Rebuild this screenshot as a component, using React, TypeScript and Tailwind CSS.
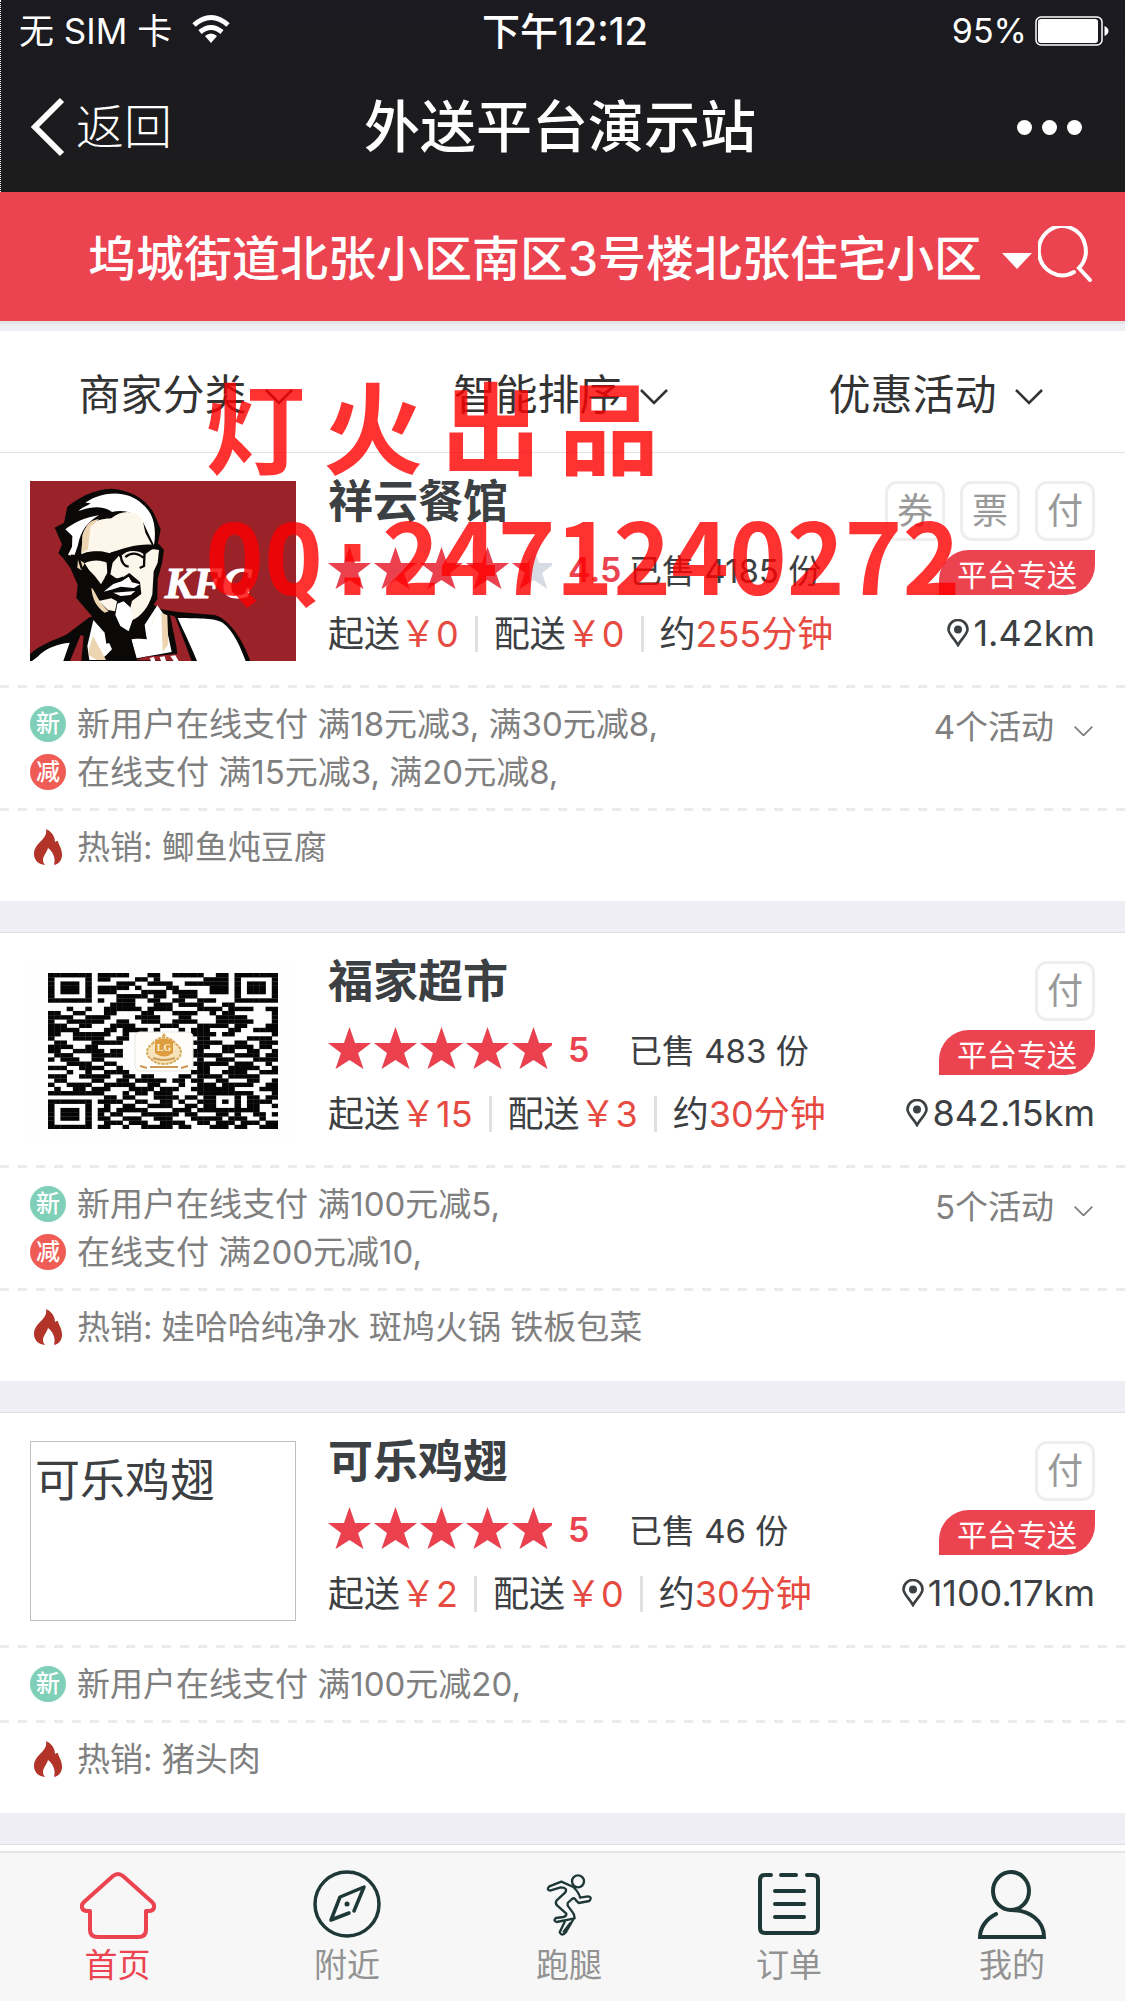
import React from 'react';

interface Store {
  name: string;
  cover: React.ReactNode;
  badges: string[];
  rating: number;
  sold: number;
  minOrder: number;
  deliveryFee: number;
  minutes: number;
  distance: string;
  newUserPromo: string;
  payPromo?: string;
  activityCount?: number;
  hot: string;
}

const filters = ['商家分类', '智能排序', '优惠活动'];

const qrRows = [
  '1111111011111000110011111001101111111',
  '1000001011000011010000000111101000001',
  '1011101000011100111100111111101011101',
  '1011101011111010000110000011101011101',
  '1011101011100001111011110011101011101',
  '1000001000011111011001110000001000001',
  '1111111010011100110011001110001111111',
  '0000000000111100011101111000110000000',
  '0001001001111110111100001111011110011',
  '1100110001100001100011110010110000001',
  '1111001111000011110001100001111100001',
  '1001111110011001110011110001111110001',
  '1110011000111100001110001111101100011',
  '1111100001101111010001011100011001111',
  '1100111111001000000000011110110000001',
  '1000111110011000000000001100000011110',
  '0110000111110000000000011111001100111',
  '1111001100000000000000001100111110110',
  '1100111110110000000000011000110011001',
  '0111000111110000000000011111001111011',
  '1011100110000000000000001001110001111',
  '0001111001100000000000011111101110010',
  '1110011110010000000000001100011111001',
  '0001001001111000000000011100111100111',
  '1110011111001101100001101111011111000',
  '0110000110011011111011011001100011001',
  '1001111001111100110001001110111110011',
  '0100110111000111101110011111110000111',
  '1111111110001011011100001111111110001',
  '0000000001101100011110110110001011011',
  '1111111011110011001101001110101011110',
  '1000001001001100111100110110001011001',
  '1011101011011111000011101111111111000',
  '1011101010110001111110110001101001101',
  '1011101011001110011100011111011100100',
  '1000001001110111001111001101110111011',
  '1111111011001001111101100011101100111',
];

const starPoints = '21.5,0 27,16 43,16 30,26 35.5,42 21.5,33 7.5,42 13,26 0,16 16,16';

function ChefCover() {
  return (
    <svg viewBox="6 15 798 540" preserveAspectRatio="none" className="h-full w-full" role="img" aria-label="KFC">
      <rect x="6" y="15" width="798" height="540" fill="#9a2229" />
      <path d="M6 555V534C40 502 95 487 118 474L182 425 350 370 400 400 450 408 560 417C605 430 645 492 667 555Z" fill="#0b0908" />
      <path d="M118 92C150 66 195 40 250 38 320 42 368 82 385 128L398 160 390 202 408 222 402 262 389 310 388 370 360 410 345 475 240 475 183 410 145 366 149 326 127 276 105 246 91 232 102 205 80 155 108 140Z" fill="#0b0908" />
      <path d="M152 105C160 94 178 90 188 82L172 80C230 42 300 44 342 83 378 112 386 156 378 208L352 153C338 112 290 98 252 108 226 88 190 91 152 105Z" fill="#fff" />
      <path d="M112 160C135 143 168 124 213 118 178 138 158 165 150 207L138 242 120 236 132 212 133 180Z" fill="#fff" />
      <path d="M164 176C178 137 215 129 250 127 284 98 325 104 344 132L352 170 371 206C330 203 282 217 246 232 215 220 180 227 160 235Z" fill="#fdf6eb" />
      <path d="M164 176C178 137 192 133 213 129L187 154 180 220 160 232Z" fill="#ecd5b0" />
      <path d="M274 238C292 225 326 218 350 236L373 219 393 222 389 260 377 286 373 355C362 395 337 423 312 433L305 403 312 375 340 354 336 318 304 291 272 312 247 295 254 260Z" fill="#fdf6eb" />
      <path d="M170 262C190 250 221 252 236 260L238 292 219 325 201 301 183 282Z" fill="#fdf6eb" />
      <path d="M190 335C201 341 205 370 242 406L230 410C205 392 193 370 190 335ZM170 262L150 249 148 275 160 282Z" fill="#ecd5b0" />
      <path d="M212 375L250 367 267 376 261 406 240 402Z" fill="#fdf6eb" />
      <path d="M227 347L256 324 281 316 302 302 312 319 336 325 318 336 278 332 255 340Z" fill="#fff" />
      <path d="M256 350L322 345 308 357 278 360ZM268 383L287 376 306 393 316 425 302 466 277 450 262 417Z" fill="#fff" />
      <path d="M128 240L157 243 C180 225 220 230 242 240 C255 227 270 230 276 237 C300 212 345 213 365 217L392 212" fill="none" stroke="#0b0908" strokeWidth="9" />
      <path d="M151 243L161 276 181 285M238 242L245 284 235 306M278 238C280 260 287 270 302 272M350 220L348 270 335 276M172 252C193 235 208 235 226 255M292 243C310 228 330 232 346 245M233 300C248 313 267 314 286 305" fill="none" stroke="#0b0908" strokeWidth="7" />
      <path d="M196 432L230 470 252 520 236 536 218 552 184 552 178 510Z" fill="#fff" />
      <path d="M183 520L195 480 234 552H207L182 538Z" fill="#ecd5b0" />
      <path d="M388 388L407 415 431 528 326 547 310 490 355 484 350 446Z" fill="#fff" />
      <path d="M388 388L374 440 344 492 371 446ZM400 410L418 418 421 505 404 528Z" fill="#ecd5b0" />
      <path d="M12 555L28 543C55 515 87 504 125 500L106 555ZM449 426C520 427 558 426 584 440 618 466 637 513 653 555H507C480 490 462 456 449 426Z" fill="#fff" />
      <path d="M126 555L158 477 167 480 160 555ZM426 417L441 422 491 555H450L445 510Z" fill="#9a2229" />
      <path d="M322 553L352 542 472 532 480 555Z" fill="#9a2229" />
      <path d="M365 546l13-3 4 12h-13zM395 543l15-2 4 14h-15zM427 540l15-2 10 17h-15z" fill="#fff" />
      <path d="M230 471L283 474 347 452 357 490 309 486 326 555H284L289 490 235 503Z" fill="#0b0908" />
      <text x="410" y="365" fill="#fff" stroke="#fff" strokeWidth="3" fontSize="130" fontWeight="700" fontStyle="italic" fontFamily="'Liberation Serif', serif">KFC</text>
    </svg>
  );
}

function QrCover() {
  return (
    <svg viewBox="0 0 266 180" className="h-full w-full" role="img" aria-label="福家超市二维码">
      <rect width="266" height="180" fill="#fefefe" />
      <svg x="18" y="12" width="230" height="156" viewBox="0 0 37 37" preserveAspectRatio="none">
        {qrRows.map((row, y) =>
          row.split('').map((cell, x) => cell === '1' && <rect key={`${x}-${y}`} x={x} y={y} width="1.05" height="1.05" fill="#050505" />)
        )}
      </svg>
      <rect x="105" y="71" width="58" height="39" rx="5" fill="#fffefb" stroke="#e9e5dd" />
      <path d="M122 83q5-6 12-7 7 1 12 7 7 5 4 12-6 8-16 8t-16-8q-3-7 4-12z" fill="#f7e4bb" stroke="#d6a95a" strokeWidth="2" strokeDasharray="3 1" />
      <path d="M125 80q9-5 18 0v12q-9 7-18 0zM134 72l2 3h-4z" fill="#dd9c3d" />
      <text x="134" y="90" textAnchor="middle" fontSize="10" fontWeight="700" fill="#fff3d6" fontFamily="'Liberation Serif', serif">LG</text>
      <path d="M120 106h28M110 105l7 2M158 105l-7 2M123 97q11 4 22 0" stroke="#c99b56" strokeWidth="2" fill="none" />
    </svg>
  );
}

const stores: Store[] = [
  {
    name: '祥云餐馆',
    cover: <ChefCover />,
    badges: ['券', '票', '付'],
    rating: 4.5,
    sold: 4185,
    minOrder: 0,
    deliveryFee: 0,
    minutes: 255,
    distance: '1.42km',
    newUserPromo: '新用户在线支付 满18元减3, 满30元减8,',
    payPromo: '在线支付 满15元减3, 满20元减8,',
    activityCount: 4,
    hot: '鲫鱼炖豆腐',
  },
  {
    name: '福家超市',
    cover: <QrCover />,
    badges: ['付'],
    rating: 5,
    sold: 483,
    minOrder: 15,
    deliveryFee: 3,
    minutes: 30,
    distance: '842.15km',
    newUserPromo: '新用户在线支付 满100元减5,',
    payPromo: '在线支付 满200元减10,',
    activityCount: 5,
    hot: '娃哈哈纯净水 斑鸠火锅 铁板包菜',
  },
  {
    name: '可乐鸡翅',
    cover: <div className="h-full w-full border border-[#c0c0c0] px-1 pt-4 text-[45px] leading-[45px]">可乐鸡翅</div>,
    badges: ['付'],
    rating: 5,
    sold: 46,
    minOrder: 2,
    deliveryFee: 0,
    minutes: 30,
    distance: '1100.17km',
    newUserPromo: '新用户在线支付 满100元减20,',
    hot: '猪头肉',
  },
];

function Chevron({ className }: { className: string }) {
  return (
    <svg viewBox="0 0 28 16" className={className} fill="none" stroke="currentColor" strokeWidth="2.6">
      <path d="M1 1l13 13L27 1" />
    </svg>
  );
}

function Stars({ id, rating }: { id: string; rating: number }) {
  return (
    <svg width="224" height="42" viewBox="0 0 224 42" className="shrink-0" role="img" aria-label={`${rating}`}>
      <clipPath id={id}>
        <rect width={(rating / 5) * 224} height="42" />
      </clipPath>
      {[0, 1, 2, 3, 4].map((i) => (
        <polygon key={i} points={starPoints} transform={`translate(${i * 46} 0)`} fill="#d7dbe4" />
      ))}
      <g clipPath={`url(#${id})`}>
        {[0, 1, 2, 3, 4].map((i) => (
          <polygon key={i} points={starPoints} transform={`translate(${i * 46} 0)`} fill="#eb414f" />
        ))}
      </g>
    </svg>
  );
}

function DashedLine() {
  return <div className="h-[3px] bg-[repeating-linear-gradient(90deg,#ebebeb_0_9px,transparent_9px_18px)]" />;
}

function PromoRow({ tag, color, text }: { tag: string; color: string; text: string }) {
  return (
    <div className="flex h-12 items-center">
      <span className={`flex h-9 w-9 items-center justify-center rounded-full text-[24px] leading-none font-medium text-white ${color}`}>{tag}</span>
      <span className="ml-[11px] pt-0.5 whitespace-pre">{text}</span>
    </div>
  );
}

function Flame() {
  return (
    <svg width="28" height="36" viewBox="0 0 28 36" className="mx-1 shrink-0" fill="#b23428">
      <path d="M12 0c5 2 9 7 9 13 1-1 2-1 3-1 0 3 4 7 4 14 0 5-3 9-8 10 2-7-1-13-6-17-1 4-5 8-5 12 0 2 1 4 2 5C4 35 0 31 0 25c0-6 4-10 8-14 3-3 5-7 4-11z" />
    </svg>
  );
}

function StoreCard({ store, index }: { store: Store; index: number }) {
  return (
    <article className="bg-white text-[33px] text-[#808080]">
      <div className="flex px-[30px] pt-7 pb-6 text-[#3c4043]">
        <div className="h-[180px] w-[266px] shrink-0">{store.cover}</div>
        <div className="ml-8 min-w-0 flex-1 whitespace-nowrap">
          <h2 className="text-[45px] leading-[42px] font-bold">{store.name}</h2>
          <div className="mt-6 flex h-[42px] items-center">
            <Stars id={`stars-${index}`} rating={store.rating} />
            <span className="ml-4 w-[61px] pt-1 text-[34px] leading-none font-semibold text-[#eb4350]">{store.rating}</span>
            <span className="pt-1.5 leading-none">已售 {store.sold} 份</span>
          </div>
          <div className="mt-6 flex h-[42px] items-center text-[36px] leading-[42px]">
            <span>起送<span className="text-[#e64a41]">￥{store.minOrder}</span></span>
            <span className="mx-4 h-9 w-[3px] bg-[#e0e0e0]" />
            <span>配送<span className="text-[#e64a41]">￥{store.deliveryFee}</span></span>
            <span className="mx-4 h-9 w-[3px] bg-[#e0e0e0]" />
            <span>约<span className="text-[#e64a41]">{store.minutes}分钟</span></span>
          </div>
        </div>
        <div className="flex flex-col items-end">
          <div className="flex gap-[15px]">
            {store.badges.map((badge) => (
              <span key={badge} className="flex h-[60px] w-[60px] items-center justify-center rounded-xl border-3 border-[#eee] text-[36px] leading-none text-[#999]">{badge}</span>
            ))}
          </div>
          <span className="mt-[9px] flex h-[45px] items-center rounded-tl-[30px] rounded-br-[30px] bg-[#eb4350] px-[18px] pt-1 text-[30px] leading-none text-white">平台专送</span>
          <span className="mt-[15px] flex h-[45px] items-center text-[36px] leading-none">
            <svg width="22" height="28" viewBox="0 0 22 28" className="mr-1">
              <path d="M11 26C7 19 1.500 15 1.500 10.500a9.500 9.500 0 0 1 19 0C20.500 15 15 19 11 26z" fill="none" stroke="currentColor" strokeWidth="2.600" />
              <circle cx="11" cy="10.500" r="4" fill="currentColor" />
            </svg>
            {store.distance}
          </span>
        </div>
      </div>
      <DashedLine />
      <div className="flex justify-between px-[30px] py-3">
        <div>
          <PromoRow tag="新" color="bg-[#80cfb9]" text={store.newUserPromo} />
          {store.payPromo && <PromoRow tag="减" color="bg-[#ee5c55]" text={store.payPromo} />}
        </div>
        {store.activityCount && (
          <button type="button" className="flex h-14 items-center">
            {store.activityCount}个活动
            <Chevron className="mt-1.5 mr-[2px] ml-5 w-[19px]" />
          </button>
        )}
      </div>
      <DashedLine />
      <div className="flex h-[90px] items-start px-[30px] pt-3">
        <div className="flex h-12 items-center">
          <Flame />
          <span className="ml-[11px] pt-0.5">热销: {store.hot}</span>
        </div>
      </div>
    </article>
  );
}

const tabs = [
  {
    label: '首页',
    active: true,
    icon: (
      <svg width="76" height="70" viewBox="0 0 76 70" fill="none" stroke="currentColor" strokeWidth="4" strokeLinejoin="round">
        <path d="M10 42H7c-5 0-7-5-3-9L33 7q5-4 10 0l29 26c4 4 2 9-3 9h-3v19q0 7-8 7H18q-8 0-8-7z" />
      </svg>
    ),
  },
  {
    label: '附近',
    icon: (
      <svg width="68" height="70" viewBox="0 0 68 70" fill="none" stroke="#1e3838" strokeWidth="3.500" strokeLinecap="round" strokeLinejoin="round">
        <circle cx="34" cy="35" r="32" />
        <path d="M36 44L18 51l9-23 24-10-10 24" />
        <circle cx="34" cy="35" r="2.500" fill="#1e3838" stroke="none" />
      </svg>
    ),
  },
  {
    label: '跑腿',
    icon: (
      <svg width="50" height="70" viewBox="70 58 150 210" fill="none" stroke="#1e3838" strokeWidth="7" strokeLinecap="round" strokeLinejoin="round">
        <circle cx="172" cy="95" r="18" />
        <path d="M158 112L122 96 86 110Q76 120 88 123L120 113Q142 114 134 128L108 152Q102 160 110 168L137 192Q138 200 128 202L106 205Q96 213 108 217L162 206Q162 194 156 188L141 168V160L154 148Q162 142 166 152L174 160 206 154Q216 142 202 140L178 144Q176 130 158 112M157 211L136 247Q124 262 117 248L132 217M148 221L129 246" />
      </svg>
    ),
  },
  {
    label: '订单',
    icon: (
      <svg width="62" height="70" viewBox="0 0 62 70" fill="none" stroke="#1e3838" strokeWidth="4" strokeLinecap="round">
        <path d="M13 6H7q-5 0-5 5v48q0 5 5 5h48q5 0 5-5V11q0-5-5-5h-6M23 6h15M17 22h29M17 35h29M17 48h29" />
      </svg>
    ),
  },
  {
    label: '我的',
    icon: (
      <svg width="68" height="70" viewBox="0 0 68 70" fill="none" stroke="#1e3838" strokeWidth="4" strokeLinecap="round">
        <ellipse cx="33" cy="22" rx="18" ry="19" />
        <path d="M18 45C8 50 2 59 2 68h64C66 52 52 41 33 41" />
      </svg>
    ),
  },
];

export default function App() {
  return (
    <div className="flex min-h-screen flex-col bg-[#efeef4] font-['Inter','Noto_Sans_CJK_SC',sans-serif]" lang="zh-CN">
      <header className="h-48 border-l border-dotted border-white bg-linear-to-b from-[#1b1a20] to-[#1c1c1d] text-white">
        <div className="grid h-[62px] grid-cols-[1fr_auto_1fr] items-center text-[35px] leading-none">
          <div className="flex items-center pl-[18px]">
            <span>无 SIM 卡</span>
            <svg width="38" height="30" viewBox="0 0 38 30" className="mb-1 ml-5" fill="none" stroke="currentColor" strokeWidth="5">
              <path d="M2 11Q19-4 36 11M8 18q11-9 22 0" />
              <path d="M19 29l-6-7q6-5 12 0z" fill="currentColor" stroke="none" />
            </svg>
          </div>
          <span className="pl-1 text-[38px] font-medium">下午12:12</span>
          <div className="flex items-center justify-end pr-4">
            <span className="mr-2 text-[34px]">95%</span>
            <svg width="74" height="30" viewBox="0 0 74 30">
              <rect x="1" y="1" width="66" height="28" rx="5" fill="none" stroke="#fff" strokeWidth="1.500" />
              <rect x="3" y="3" width="60" height="24" rx="3" fill="#fff" />
              <path d="M69.500 10q4 2 4 5t-4 5z" fill="#fff" />
            </svg>
          </div>
        </div>
        <div className="grid h-[130px] grid-cols-[1fr_auto_1fr] items-center pr-1.5">
          <button type="button" className="flex items-center pl-[29px] text-[48px] leading-none font-light">
            <svg width="36" height="60" viewBox="0 0 36 60" className="mr-2.5" fill="none" stroke="currentColor" strokeWidth="6">
              <path d="M32 3L5 30l27 27" />
            </svg>
            <span>返回</span>
          </button>
          <h1 className="text-[56px] leading-none font-medium">外送平台演示站</h1>
          <button type="button" aria-label="更多" className="flex justify-end gap-2.5 pr-[37px]">
            <i className="h-[15px] w-[15px] rounded-full bg-white" />
            <i className="h-[15px] w-[15px] rounded-full bg-white" />
            <i className="h-[15px] w-[15px] rounded-full bg-white" />
          </button>
        </div>
      </header>

      <div className="flex h-[129px] items-center justify-end bg-[#eb4350] pr-8 text-white">
        <button type="button" className="flex items-center pt-1 text-[48px] leading-none font-medium whitespace-nowrap">
          坞城街道北张小区南区3号楼北张住宅小区
          <svg width="30" height="17" viewBox="0 0 30 17" className="mt-1 ml-5" fill="currentColor">
            <path d="M0 1h30L15 17z" />
          </svg>
        </button>
        <button type="button" aria-label="搜索" className="ml-1.5 pb-1.5">
          <svg width="55" height="56" viewBox="0 0 55 56" fill="none" stroke="currentColor" strokeWidth="4" strokeLinecap="round">
            <path d="M36 46a23.500 24.500 0 1 1 5-4l11 12" />
          </svg>
        </button>
      </div>

      <main className="relative">
        <div className="h-[3px] bg-[#e5e5e8]" />
        <div className="mt-[7px] grid h-[122px] grid-cols-3 border-b border-[#e2e2e2] bg-white">
          {filters.map((label) => (
            <button key={label} type="button" className="flex items-center justify-center pt-1.5 pr-1 text-[42px] leading-none text-[#333]">
              {label}
              <Chevron className="mt-1 ml-[18px] w-7" />
            </button>
          ))}
        </div>

        <div className="flex flex-col gap-[31px]">
          {stores.map((store, index) => (
            <div key={store.name} className={index > 0 ? 'border-t border-[#dedede]' : ''}>
              <StoreCard store={store} index={index} />
            </div>
          ))}
          <div className="h-[7px] border-t border-[#dedede] bg-white" />
        </div>

        <div className="pointer-events-none absolute top-[53px] left-[205px] font-['Noto_Sans_CJK_SC',sans-serif] font-bold whitespace-nowrap text-[#f00] opacity-80">
          <div className="flex gap-[18px] text-[100px] leading-[100px]">
            <span>灯</span>
            <span>火</span>
            <span>出</span>
            <span>品</span>
          </div>
          <div className="mt-7 flex items-baseline text-[98px] leading-[100px]">
            <span className="font-['DejaVu_Sans_Mono',monospace]">QQ:</span>
            <span>2471240272</span>
          </div>
        </div>
      </main>

      <nav className="mt-auto grid h-[150px] grid-cols-[235fr_224fr_220fr_220fr_226fr] border-t-2 border-[#e5e5e5] bg-[#f7f7f7] pt-4">
        {tabs.map((tab) => (
          <a key={tab.label} href="#" className={`flex flex-col items-center text-[33px] leading-[42px] ${tab.active ? 'text-[#eb4350]' : 'text-[#929292]'}`}>
            {tab.icon}
            <span className="mt-[5px]">{tab.label}</span>
          </a>
        ))}
      </nav>
    </div>
  );
}
